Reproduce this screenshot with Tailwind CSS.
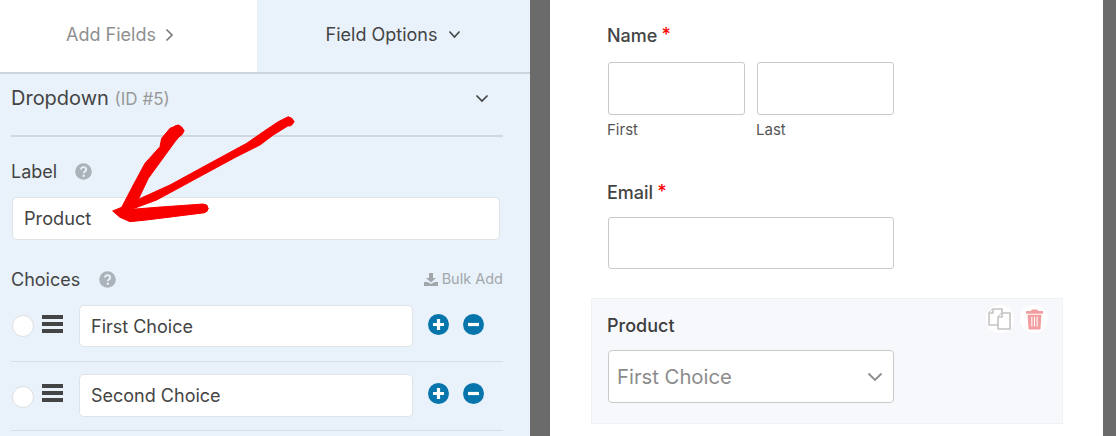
<!doctype html>
<html><head><meta charset="utf-8">
<script src="https://cdn.jsdelivr.net/npm/@tailwindcss/browser@4"></script>
</head>
<body class="m-0 w-[1116px] h-[436px] overflow-hidden bg-white font-['Inter','Liberation_Sans',sans-serif] text-[#444]">
<div class="relative flex w-[1116px] h-[436px] overflow-hidden">
  <aside class="w-[530px] h-full shrink-0 bg-[#e9f2fb] flex flex-col">
    <div class="flex h-[74px] border-b-2 border-[#ccd3da]">
      <div class="w-[257px] pb-[3px] pr-[17px] bg-white flex items-center justify-center gap-[9px] text-[18px] text-[#8f8f8f]">Add Fields
        <svg width="9" height="14" viewBox="0 0 9 14" fill="none" stroke="#777" stroke-width="1.6"><path d="M1.500 1.500 7 7l-5.500 5.500"/></svg>
      </div>
      <div class="flex-1 pb-[3px] flex items-center justify-center gap-[11px] text-[18px] text-[#444]">Field Options
        <svg width="13" height="9" viewBox="0 0 13 9" fill="none" stroke="#444" stroke-width="1.6"><path d="M1.500 1.500 6.500 7l5-5.500"/></svg>
      </div>
    </div>
    <div class="pl-[11px] pr-[27px] flex flex-col">
      <div class="flex items-center justify-between h-[48px] pr-[14px]">
        <div class="text-[20px] text-[#444] leading-none">Dropdown <span class="text-[17px] text-[#999]">(ID #5)</span></div>
        <svg width="14" height="9" viewBox="0 0 14 9" fill="none" stroke="#444" stroke-width="1.7"><path d="M1.500 1.500 7 7l5.500-5.500"/></svg>
      </div>
      <div class="h-[2px] mt-[13px] bg-[#cfd6de]"></div>
      <div class="flex items-center gap-[18px] mt-[24px] h-[20px] text-[18px]">Label
        <svg width="17" height="17" viewBox="0 0 17 17"><circle cx="8.500" cy="8.500" r="8.300" fill="#abb2b9"/><path d="M6 6.600c0-3.300 5.200-3.300 5.200-.2 0 2-2.500 2-2.500 3.800" fill="none" stroke="#e9f2fb" stroke-width="1.900"/><circle cx="8.700" cy="12.700" r="1.200" fill="#e9f2fb"/></svg>
      </div>
      <div class="mt-[16px] ml-[1px] mr-[3px] h-[43px] bg-white border border-[#dfe3e8] rounded-[5px] flex items-center pl-[11px] text-[18.200px]">Product</div>
      <div class="flex items-center justify-between mt-[29px] h-[20px]">
        <div class="flex items-center gap-[19px] text-[18px]">Choices
          <svg width="17" height="17" viewBox="0 0 17 17"><circle cx="8.500" cy="8.500" r="8.300" fill="#abb2b9"/><path d="M6 6.600c0-3.300 5.200-3.300 5.200-.2 0 2-2.500 2-2.500 3.800" fill="none" stroke="#e9f2fb" stroke-width="1.900"/><circle cx="8.700" cy="12.700" r="1.200" fill="#e9f2fb"/></svg>
        </div>
        <div class="flex items-center gap-[4px] text-[14.500px] text-[#a2a7ac]">
          <svg width="14" height="13" viewBox="0 0 14 13" fill="#a2a7ac"><path d="M5 0h4v5h3L7 9.500 2 5h3z"/><path d="M0 9h3.500L7 11l3.500-2H14v4H0z"/></svg>
          Bulk Add
        </div>
      </div>
      <div class="flex items-start h-[57px] mt-[16px] border-b border-[#d9dee3]">
        <div class="w-[22px] h-[22px] ml-[1px] mt-[10px] rounded-full bg-white border border-[#dedfe1] shrink-0"></div>
        <div class="ml-[8px] mt-[10px] w-[21px] flex flex-col gap-[3px] shrink-0"><div class="h-[4px] bg-[#444]"></div><div class="h-[4px] bg-[#444]"></div><div class="h-[4px] bg-[#444]"></div></div>
        <div class="ml-[16px] w-[334px] h-[42px] bg-white border border-[#dfe3e8] rounded-[5px] flex items-center pl-[11px] text-[18px]">First Choice</div>
        <div class="ml-[15px] mt-[9px] flex gap-[14px]">
          <svg width="21" height="21" viewBox="0 0 21 21"><circle cx="10.500" cy="10.500" r="10.500" fill="#0675ab"/><path d="M10.500 5v11M5 10.500h11" stroke="#fff" stroke-width="3.200"/></svg>
          <svg width="21" height="21" viewBox="0 0 21 21"><circle cx="10.500" cy="10.500" r="10.500" fill="#0675ab"/><path d="M5 10.500h11" stroke="#fff" stroke-width="3.200"/></svg>
        </div>
      </div>
      <div class="flex items-start h-[69px] pt-[12px] border-b border-[#d9dee3]">
        <div class="w-[22px] h-[22px] ml-[1px] mt-[12px] rounded-full bg-white border border-[#dedfe1] shrink-0"></div>
        <div class="ml-[8px] mt-[10px] w-[21px] flex flex-col gap-[3px] shrink-0"><div class="h-[4px] bg-[#444]"></div><div class="h-[4px] bg-[#444]"></div><div class="h-[4px] bg-[#444]"></div></div>
        <div class="ml-[16px] w-[334px] h-[43px] bg-white border border-[#dfe3e8] rounded-[5px] flex items-center pl-[11px] text-[18px]">Second Choice</div>
        <div class="ml-[15px] mt-[9px] flex gap-[14px]">
          <svg width="21" height="21" viewBox="0 0 21 21"><circle cx="10.500" cy="10.500" r="10.500" fill="#0675ab"/><path d="M10.500 5v11M5 10.500h11" stroke="#fff" stroke-width="3.200"/></svg>
          <svg width="21" height="21" viewBox="0 0 21 21"><circle cx="10.500" cy="10.500" r="10.500" fill="#0675ab"/><path d="M5 10.500h11" stroke="#fff" stroke-width="3.200"/></svg>
        </div>
      </div>
    </div>
  </aside>
  <div class="w-[20px] h-full shrink-0 bg-[#6b6b6b]"></div>
  <main class="w-[553px] h-full shrink-0 bg-white">
    <div class="pl-[57px] pt-[25px]">
      <div class="flex items-start text-[18px] font-medium leading-[22px] text-[#444]">Name<span class="ml-[4px] text-[#f00] text-[18px] leading-[20px]">*</span></div>
      <div class="flex gap-[12px] mt-[15px] ml-[1px]">
        <div class="w-[137px] h-[53px] bg-white border border-[#c9c9c9] rounded-[3px]"></div>
        <div class="w-[137px] h-[53px] bg-white border border-[#c9c9c9] rounded-[3px]"></div>
      </div>
      <div class="flex mt-[5px] text-[15px] leading-[20px] text-[#555]"><div class="w-[149px]">First</div><div>Last</div></div>
      <div class="flex items-start mt-[42px] text-[18px] font-medium leading-[22px] text-[#444]">Email<span class="ml-[4px] text-[#f00] text-[18px] leading-[20px]">*</span></div>
      <div class="mt-[13px] ml-[1px] w-[286px] h-[52px] bg-white border border-[#c9c9c9] rounded-[3px]"></div>
    </div>
    <div class="relative ml-[41px] mt-[29px] w-[472px] h-[126px] bg-[#f7f8fb] border border-[#f0f1f4] px-[15px] pt-[16px]">
      <div class="text-[18px] font-medium leading-[22px] text-[#3d3d3d]">Product</div>
      <div class="mt-[13px] ml-[1px] w-[286px] h-[53px] bg-white border border-[#c9c9c9] rounded-[4px] flex items-center justify-between pl-[8px] pr-[10px] text-[20.300px] text-[#8c8c8c]"><span class="pt-[2px]">First Choice</span>
        <svg width="16" height="10" viewBox="0 0 16 10" fill="none" stroke="#8c8c8c" stroke-width="1.800"><path d="M1.500 1.500 8 8l6.500-6.500"/></svg>
      </div>
      <div class="absolute top-[6px] right-[14px] flex gap-[6px]">
        <div class="w-[28px] h-[28px] pl-[2px] rounded-full bg-white flex items-center justify-start">
          <svg width="23" height="22" viewBox="0 0 23 22" fill="#fff" stroke="#c4c4c4" stroke-width="1.600" stroke-linejoin="round"><path d="M5 1h9v16H1V5z"/><path d="M5 1v4H1"/><path d="M14 5h8v16H10V9z"/><path d="M14 5v4h-4"/></svg>
        </div>
        <div class="w-[28px] h-[28px] rounded-full bg-white flex items-center justify-center">
          <svg width="17" height="21" viewBox="0 0 16 19" fill="#f29ea0"><path d="M5.500 0h5l1 1.500H16v2.500H0V1.500h4.500z"/><path fill-rule="evenodd" d="M1.500 5h13l-.8 13a1 1 0 0 1-1 1H3.300a1 1 0 0 1-1-1zM5 7v9h1V7zm2.500 0v9h1V7zM10 7v9h1V7z"/></svg>
        </div>
      </div>
    </div>
  </main>
  <div class="flex-1 h-full bg-[#6b6b6b]"></div>
  <svg class="absolute left-0 top-0 pointer-events-none" width="1116" height="436" viewBox="0 0 1116 436">
    <g transform="translate(90 110) scale(.3333)" fill="#f80000" stroke="#f80000" stroke-width="3" stroke-linejoin="round">
      <path d="M68 303L95 292L130 225L165 160L210 110L215 85L240 55L265 45L283 62L255 95L215 150L175 205L145 268L240 225L350 165L470 100L520 65L565 35L595 20L613 35L590 50L550 75L510 105L440 140L320 205L200 270L125 298L200 292L340 282L355 295L345 308L250 320L170 330L120 335L90 322Z"/>
      <circle cx="597" cy="35" r="13"/>
      <circle cx="263" cy="63" r="17"/>
      <circle cx="342" cy="295" r="12"/>
    </g>
  </svg>
</div>
</body></html>
